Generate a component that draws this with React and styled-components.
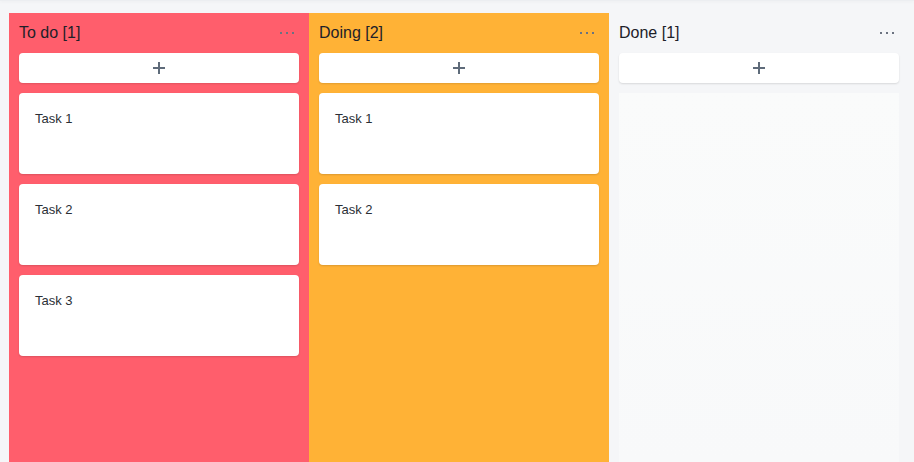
import React from "react";
import styled, { createGlobalStyle } from "styled-components";

const Global = createGlobalStyle`
  html, body { margin: 0; padding: 0; height: 100%; }
  body {
    background: #f5f6f8;
    font-family: "Liberation Sans", Arial, sans-serif;
    overflow: hidden;
  }
  #root { height: 100%; }
`;

const Page = styled.div`
  height: 462px;
  display: flex;
  flex-direction: column;
`;

const TopEdge = styled.div`
  height: 1px;
  background: #eceef1;
  box-shadow: 0 1px 3px rgba(0, 0, 0, 0.06);
`;

const Board = styled.div`
  flex: 1;
  display: flex;
  padding: 12px 0 0 9px;
  min-height: 0;
`;

const Column = styled.div`
  width: 300px;
  background: ${(p) => p.$bg};
  padding: 0 10px;
  box-sizing: border-box;
  display: flex;
  flex-direction: column;
`;

const Header = styled.div`
  height: 40px;
  display: flex;
  align-items: center;
  justify-content: space-between;
`;

const Title = styled.span`
  font-size: 16px;
  color: #1d2129;
  margin-bottom: 1px;
`;

const Dots = styled.span`
  display: flex;
  gap: 4px;
  margin-right: 5px;
  & > i {
    width: 2px;
    height: 2px;
    background: #6b7280;
    display: block;
  }
`;

const AddButton = styled.button`
  height: 30px;
  border: none;
  border-radius: 4px;
  background: #fff;
  box-shadow: 0 1px 2px rgba(0, 0, 0, 0.12);
  display: flex;
  align-items: center;
  justify-content: center;
  padding: 0;
  cursor: pointer;
`;

const List = styled.div`
  margin-top: 10px;
  display: flex;
  flex-direction: column;
  gap: 10px;
  flex: 1;
  ${(p) =>
    p.$empty &&
    `background: linear-gradient(#fafbfb, #f8f9fa);`}
`;

const Card = styled.div`
  height: 81px;
  background: #fff;
  border-radius: 4px;
  box-shadow: 0 1px 2px rgba(0, 0, 0, 0.14);
  box-sizing: border-box;
  padding: 18px 16px;
  font-size: 13px;
  color: #2b2f36;
`;

const Plus = () => (
  <svg width="14" height="14" viewBox="0 0 14 14">
    <path d="M7 1v12M1 7h12" stroke="#5f6b7a" strokeWidth="2" />
  </svg>
);

const columns = [
  { title: "To do [1]", bg: "#ff5e6c", tasks: ["Task 1", "Task 2", "Task 3"] },
  { title: "Doing [2]", bg: "#ffb236", tasks: ["Task 1", "Task 2"] },
  { title: "Done [1]", bg: "transparent", tasks: [] },
];

export default function App() {
  return (
    <Page>
      <Global />
      <TopEdge />
      <Board>
        {columns.map((c) => (
          <Column key={c.title} $bg={c.bg}>
            <Header>
              <Title>{c.title}</Title>
              <Dots>
                <i />
                <i />
                <i />
              </Dots>
            </Header>
            <AddButton aria-label="add">
              <Plus />
            </AddButton>
            <List $empty={c.tasks.length === 0}>
              {c.tasks.map((t) => (
                <Card key={t}>{t}</Card>
              ))}
            </List>
          </Column>
        ))}
      </Board>
    </Page>
  );
}
